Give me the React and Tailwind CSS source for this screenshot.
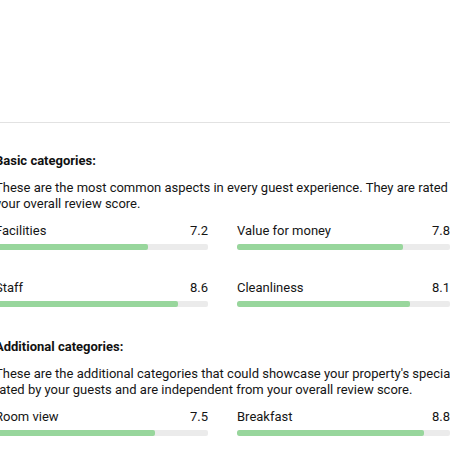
import React from 'react';

const BASIC = [
  { label: 'Facilities',      score: 7.2 },
  { label: 'Value for money', score: 7.8 },
  { label: 'Staff',           score: 8.6 },
  { label: 'Cleanliness',     score: 8.1 },
];

const ADDITIONAL = [
  { label: 'Room view', score: 7.5 },
  { label: 'Breakfast', score: 8.8 },
];

function ScoreRow({ label, score }) {
  return (
    <div className="flex flex-col">
      <div className="flex items-center justify-between text-[13px] leading-[17px] text-[#151515]">
        <span>{label}</span>
        <span>{score.toFixed(1)}</span>
      </div>
      <div className="mt-[5px] h-[6px] w-full rounded-[2px] bg-[#ebebeb] overflow-hidden">
        <div className="h-full rounded-[2px] bg-[#98d69c]" style={{ width: `${score * 10}%` }} />
      </div>
    </div>
  );
}

function Section({ title, lines, rows }) {
  return (
    <section className="flex flex-col">
      <h3 className="text-[13px] leading-[17px] font-bold text-[#111]">{title}</h3>
      <div className="mt-[11px] text-[13px] leading-4 text-[#151515]">
        {lines.map(l => (
          <p key={l} className="whitespace-nowrap">{l}</p>
        ))}
      </div>
      <div className="mt-[10px] grid grid-cols-[213px_213px] gap-x-[29px] gap-y-[29px]">
        {rows.map(r => <ScoreRow key={r.label} {...r} />)}
      </div>
    </section>
  );
}

export default function App() {
  return (
    <div className="w-[450px] h-[450px] overflow-hidden bg-white" style={{ fontFamily: 'Roboto, "Noto Sans", sans-serif' }}>
      <div className="h-[122px]" />
      <div className="h-px bg-[#e2e2e2]" />
      <div className="ml-[-5px] pt-[29px] flex flex-col gap-[31px]">
        <Section
          title="Basic categories:"
          lines={[
            'These are the most common aspects in every guest experience. They are rated by your guests and contribute to',
            'your overall review score.',
          ]}
          rows={BASIC}
        />
        <Section
          title="Additional categories:"
          lines={[
            "These are the additional categories that could showcase your property's specialities. They are",
            'rated by your guests and are independent from your overall review score.',
          ]}
          rows={ADDITIONAL}
        />
      </div>
    </div>
  );
}
